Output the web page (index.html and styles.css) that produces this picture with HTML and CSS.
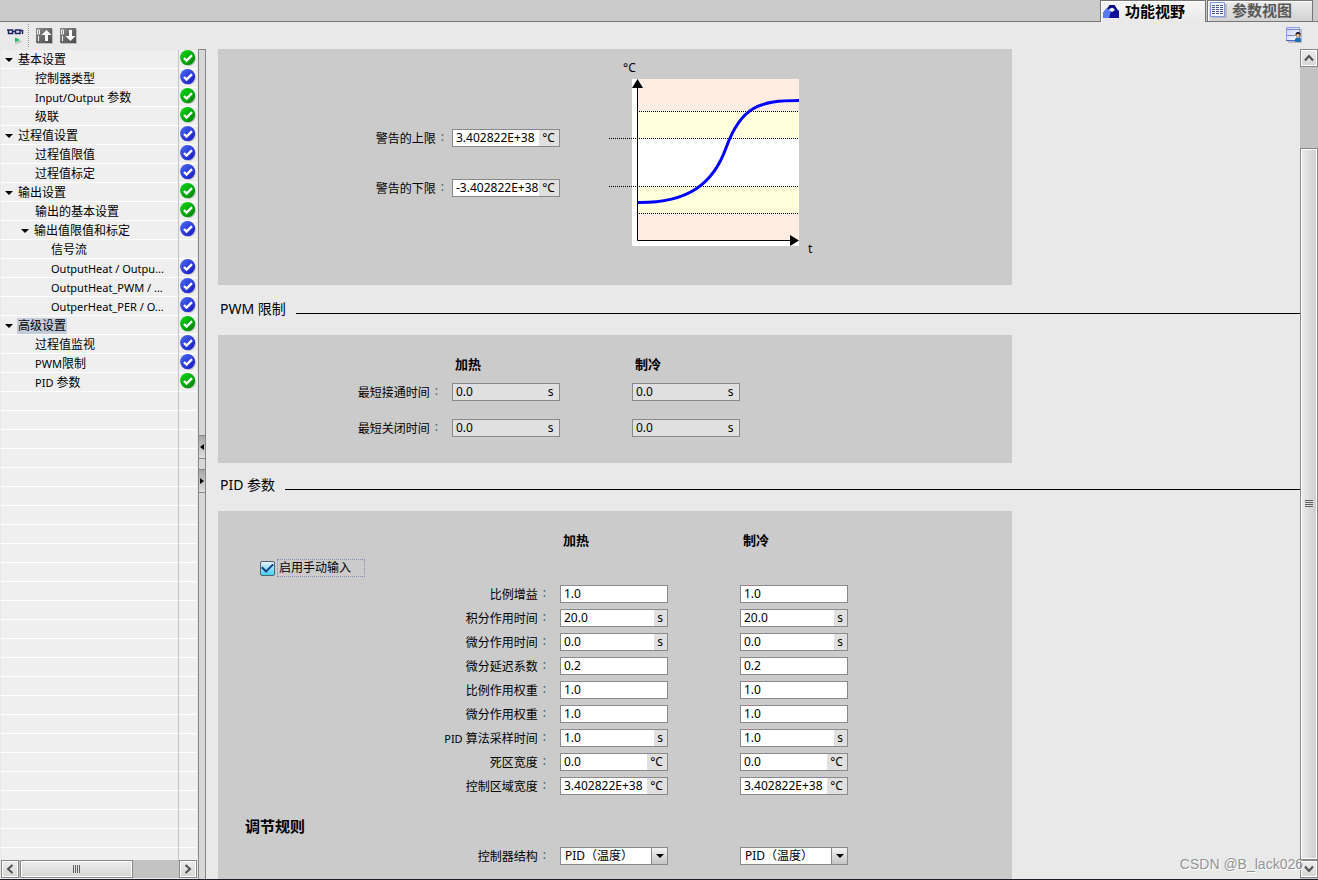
FILE: index.html
```html
<!DOCTYPE html>
<html lang="zh-CN">
<head>
<meta charset="utf-8">
<title>PID 组态</title>
<link rel="stylesheet" href="styles.css">
</head>
<body>
<svg class="defs" width="0" height="0" aria-hidden="true">
  <defs>
    <linearGradient id="g-green" x1="0" y1="0" x2="1" y2="1"><stop offset="0" stop-color="#00dc10"/><stop offset="1" stop-color="#007d08"/></linearGradient>
    <linearGradient id="g-blue" x1="0" y1="0" x2="1" y2="1"><stop offset="0" stop-color="#4a6cf4"/><stop offset="1" stop-color="#1414c0"/></linearGradient>
    <linearGradient id="g-dark" x1="0" y1="0" x2="1" y2="1"><stop offset="0" stop-color="#8a8a8a"/><stop offset="1" stop-color="#4c4c4c"/></linearGradient>
    <linearGradient id="g-page" x1="0" y1="0" x2="1" y2="1"><stop offset="0" stop-color="#c4d0f8"/><stop offset="1" stop-color="#ffffff"/></linearGradient>
    <symbol id="ok" viewBox="0 0 16 16"><circle cx="8.6" cy="8.8" r="7.3" fill="#c4c4c4"/><circle cx="7.6" cy="7.6" r="7.5" fill="url(#g-green)"/><path d="M4 8 L6.6 10.6 L12 5.2" fill="none" stroke="#fff" stroke-width="2.4"/></symbol>
    <symbol id="edit" viewBox="0 0 16 16"><circle cx="8.6" cy="8.8" r="7.3" fill="#c4c4c4"/><circle cx="7.6" cy="7.6" r="7.5" fill="url(#g-blue)"/><path d="M4 8 L6.6 10.6 L12 5.2" fill="none" stroke="#fff" stroke-width="2.4"/></symbol>
    <symbol id="down" viewBox="0 0 8 4"><path d="M0 0 H8 L4 4 Z" fill="#000"/></symbol>
  </defs>
</svg>

<header class="tabs" role="tablist">
  <button class="tab tab-active" role="tab" aria-selected="true">
    <svg width="17" height="16" viewBox="0 0 17 16"><path d="M0 10 L3 6 L6 4 H12 L16 8 V15 H0 Z" fill="#10109a"/><path d="M0 10 L3 6 L6 4 L8 8 L6 15 H0 Z" fill="#5a7cf0"/><path d="M5 6 L7 3 H11 L13 6" fill="none" stroke="#10107c" stroke-width="2"/><path d="M6 7 L8 5 H10 L12 7 L9 9 Z" fill="#eef2fe"/></svg>
    <span>功能视野</span>
  </button>
  <button class="tab" role="tab" aria-selected="false">
    <svg width="17" height="16" viewBox="0 0 17 16"><path d="M2 2 H17 V16 H2 Z" fill="#b8b8c0"/><path d="M.5 .5 H14.500 V14.500 H.5 Z" fill="#f2f5ff" stroke="#8098e0"/><path d="M2 3.500 H14 M2 5.500 H14 M2 7.500 H14 M2 9.500 H14 M2 11.500 H14" stroke="#4a5680" stroke-dasharray="3 1"/></svg>
    <span>参数视图</span>
  </button>
</header>

<div class="toolbar">
  <button class="tool" aria-label="监视">
    <svg width="18" height="18" viewBox="0 0 18 18"><path d="M1 3 H6.500 V6.500 H2.500 V3 M9.500 3 H14 V6.500 H9.500 Z M6 4.500 H10 M14 3.500 H16.500 V7" fill="none" stroke="#1c2468" stroke-width="1.500"/><path d="M9 11 L17 14.500 L9 18 Z" fill="#c4ccc4"/><path d="M9 10.500 L14 13 L9 15 Z" fill="#16c060"/></svg>
  </button>
  <span class="tool-sep"></span>
  <button class="tool" aria-label="上传">
    <svg width="17" height="16" viewBox="0 0 17 16"><path d="M1 1 H17 V16 H1 Z" fill="#bdbdbd"/><path d="M0 0 H16 V15 H0 Z" fill="url(#g-dark)"/><path d="M1.500 2 H3.500 V6 H1.500 Z M2.500 8 V13" fill="none" stroke="#eee"/><path d="M10.500 13 V5" fill="none" stroke="#fff" stroke-width="3"/><path d="M5.500 7 L10.500 2 L15.500 7 Z" fill="#fff"/></svg>
  </button>
  <button class="tool" aria-label="下载">
    <svg width="17" height="16" viewBox="0 0 17 16"><path d="M1 1 H17 V16 H1 Z" fill="#bdbdbd"/><path d="M0 0 H16 V15 H0 Z" fill="url(#g-dark)"/><path d="M1.500 2 H3.500 V6 H1.500 Z M2.500 8 V13" fill="none" stroke="#eee"/><path d="M10.500 2 V10" fill="none" stroke="#fff" stroke-width="3"/><path d="M5.500 8 L10.500 13 L15.500 8 Z" fill="#fff"/></svg>
  </button>
  <button class="tool tool-right" aria-label="视图设置">
    <svg width="17" height="17" viewBox="0 0 17 17"><path d="M2 2 H16 V16 H2 Z" fill="#bcbcc4"/><path d="M.5 .5 H13.500 V13.500 H.5 Z" fill="url(#g-page)" stroke="#8ca0e8"/><path d="M0 13.500 H14" stroke="#4c60c8"/><path d="M1 2.500 H14 M1 8.500 H9" stroke="#7c88b0"/><circle cx="12" cy="7.500" r="2.500" fill="#10102c"/><circle cx="12" cy="8.500" r="1.800" fill="#f0bc80"/><path d="M9 15 V12 L10.500 10.500 H13.500 L15 12 V15 Z" fill="#2470b0"/></svg>
  </button>
</div>

<div class="work">
  <nav class="side">
    <ul class="tree">
      <li class="row"><span class="name"><button class="twist" aria-label="折叠"><svg width="8" height="4"><use href="#down"/></svg></button><a href="#">基本设置</a></span><svg class="state"><use href="#ok"/></svg></li>
      <li class="row l1"><span class="name"><a href="#">控制器类型</a></span><svg class="state"><use href="#edit"/></svg></li>
      <li class="row l1"><span class="name"><a href="#"><span class="latin">Input/Output</span> 参数</a></span><svg class="state"><use href="#ok"/></svg></li>
      <li class="row l1"><span class="name"><a href="#">级联</a></span><svg class="state"><use href="#ok"/></svg></li>
      <li class="row"><span class="name"><button class="twist" aria-label="折叠"><svg width="8" height="4"><use href="#down"/></svg></button><a href="#">过程值设置</a></span><svg class="state"><use href="#edit"/></svg></li>
      <li class="row l1"><span class="name"><a href="#">过程值限值</a></span><svg class="state"><use href="#edit"/></svg></li>
      <li class="row l1"><span class="name"><a href="#">过程值标定</a></span><svg class="state"><use href="#edit"/></svg></li>
      <li class="row"><span class="name"><button class="twist" aria-label="折叠"><svg width="8" height="4"><use href="#down"/></svg></button><a href="#">输出设置</a></span><svg class="state"><use href="#ok"/></svg></li>
      <li class="row l1"><span class="name"><a href="#">输出的基本设置</a></span><svg class="state"><use href="#ok"/></svg></li>
      <li class="row l1"><span class="name"><button class="twist" aria-label="折叠"><svg width="8" height="4"><use href="#down"/></svg></button><a href="#">输出值限值和标定</a></span><svg class="state"><use href="#edit"/></svg></li>
      <li class="row l2"><span class="name"><a href="#">信号流</a></span></li>
      <li class="row l2"><span class="name"><a class="latin" href="#">OutputHeat / Outpu...</a></span><svg class="state"><use href="#edit"/></svg></li>
      <li class="row l2"><span class="name"><a class="latin" href="#">OutputHeat_PWM / ...</a></span><svg class="state"><use href="#edit"/></svg></li>
      <li class="row l2"><span class="name"><a class="latin" href="#">OutperHeat_PER / O...</a></span><svg class="state"><use href="#edit"/></svg></li>
      <li class="row"><span class="name"><button class="twist" aria-label="折叠"><svg width="8" height="4"><use href="#down"/></svg></button><a class="current" href="#">高级设置</a></span><svg class="state"><use href="#ok"/></svg></li>
      <li class="row l1"><span class="name"><a href="#">过程值监视</a></span><svg class="state"><use href="#edit"/></svg></li>
      <li class="row l1"><span class="name"><a href="#"><span class="latin">PWM</span>限制</a></span><svg class="state"><use href="#edit"/></svg></li>
      <li class="row l1"><span class="name"><a href="#"><span class="latin">PID</span> 参数</a></span><svg class="state"><use href="#ok"/></svg></li>
    </ul>
    <div class="hscroll">
      <button class="sb-btn" aria-label="向左"><svg width="8" height="10" viewBox="0 0 8 10"><path d="M6.500 1 L2 5 L6.500 9" fill="none" stroke="#505050" stroke-width="2"/></svg></button>
      <div class="hthumb"><svg width="8" height="8"><path d="M.5 0 V8 M2.500 0 V8 M4.500 0 V8 M6.500 0 V8" stroke="#606060"/></svg></div>
      <button class="sb-btn sb-end" aria-label="向右"><svg width="8" height="10" viewBox="0 0 8 10"><path d="M1.500 1 L6 5 L1.500 9" fill="none" stroke="#505050" stroke-width="2"/></svg></button>
    </div>
  </nav>

  <div class="splitter">
    <button aria-label="收起"><svg width="4" height="6"><path d="M4 0 V6 L0 3 Z"/></svg></button>
    <button aria-label="展开"><svg width="4" height="6"><path d="M0 0 V6 L4 3 Z"/></svg></button>
  </div>

  <main class="content">
    <section class="panel panel-limits">
      <div class="limits">
        <label class="lbl" for="hi">警告的上限<i>:</i></label>
        <span class="field"><input id="hi" value="3.402822E+38"><span class="unit wide">°C</span></span>
        <label class="lbl" for="lo">警告的下限<i>:</i></label>
        <span class="field"><input id="lo" value="-3.402822E+38"><span class="unit wide">°C</span></span>
      </div>
      <svg class="chart" width="208" height="196" viewBox="608 60 208 196" role="img" aria-label="温度曲线">
        <path d="M632 79 H799 V246 H632 Z" fill="#fff"/>
        <path d="M638 79 H799 V111 H638 Z M638 213 H799 V240 H638 Z" fill="#ffece2"/>
        <path d="M638 111 H799 V138 H638 Z M638 186 H799 V213 H638 Z" fill="#ffffdc"/>
        <path d="M639 111.500 H799 M609 138.500 H799 M609 186.500 H799 M639 213.500 H799" stroke="#000" stroke-dasharray="1 1"/>
        <path d="M638 202.500 C688 203 713 184 726 148 C741 106 760 100.500 799 100.500" fill="none" stroke="#00f" stroke-width="3"/>
        <path d="M637.500 86 V240.500 H792" fill="none" stroke="#000"/>
        <path d="M637.500 79 L643 88 H632 Z M799 240.500 L790 235 V246 Z" fill="#000"/>
        <text x="623" y="72">°C</text>
        <text x="808" y="253">t</text>
      </svg>
    </section>

    <h2 class="section section-tall">PWM 限制</h2>
    <section class="panel panel-pwm">
      <div class="grid grid-pwm">
        <b class="head head-a">加热</b><b class="head">制冷</b>
        <label class="lbl" for="on1">最短接通时间<i>:</i></label>
        <span class="field off"><input id="on1" value="0.0" readonly><span class="unit">s</span></span>
        <span class="field off"><input aria-label="最短接通时间 制冷" value="0.0" readonly><span class="unit">s</span></span>
        <label class="lbl" for="off1">最短关闭时间<i>:</i></label>
        <span class="field off"><input id="off1" value="0.0" readonly><span class="unit">s</span></span>
        <span class="field off"><input aria-label="最短关闭时间 制冷" value="0.0" readonly><span class="unit">s</span></span>
      </div>
    </section>

    <h2 class="section">PID 参数</h2>
    <section class="panel panel-pid">
      <div class="grid grid-pid">
        <b class="head head-a">加热</b><b class="head">制冷</b>
      </div>
      <div class="manual">
        <input type="checkbox" id="manual" checked><label for="manual">启用手动输入</label>
      </div>
      <div class="grid grid-pid">
        <label class="lbl" for="p1">比例增益<i>:</i></label>
        <span class="field"><input id="p1" value="1.0"></span>
        <span class="field"><input aria-label="比例增益 制冷" value="1.0"></span>
        <label class="lbl" for="p2">积分作用时间<i>:</i></label>
        <span class="field"><input id="p2" value="20.0"><span class="unit">s</span></span>
        <span class="field"><input aria-label="积分作用时间 制冷" value="20.0"><span class="unit">s</span></span>
        <label class="lbl" for="p3">微分作用时间<i>:</i></label>
        <span class="field"><input id="p3" value="0.0"><span class="unit">s</span></span>
        <span class="field"><input aria-label="微分作用时间 制冷" value="0.0"><span class="unit">s</span></span>
        <label class="lbl" for="p4">微分延迟系数<i>:</i></label>
        <span class="field"><input id="p4" value="0.2"></span>
        <span class="field"><input aria-label="微分延迟系数 制冷" value="0.2"></span>
        <label class="lbl" for="p5">比例作用权重<i>:</i></label>
        <span class="field"><input id="p5" value="1.0"></span>
        <span class="field"><input aria-label="比例作用权重 制冷" value="1.0"></span>
        <label class="lbl" for="p6">微分作用权重<i>:</i></label>
        <span class="field"><input id="p6" value="1.0"></span>
        <span class="field"><input aria-label="微分作用权重 制冷" value="1.0"></span>
        <label class="lbl" for="p7"><span><span class="latin">PID</span> 算法采样时间</span><i>:</i></label>
        <span class="field"><input id="p7" value="1.0"><span class="unit">s</span></span>
        <span class="field"><input aria-label="PID 算法采样时间 制冷" value="1.0"><span class="unit">s</span></span>
        <label class="lbl" for="p8">死区宽度<i>:</i></label>
        <span class="field"><input id="p8" value="0.0"><span class="unit wide">°C</span></span>
        <span class="field"><input aria-label="死区宽度 制冷" value="0.0"><span class="unit wide">°C</span></span>
        <label class="lbl" for="p9">控制区域宽度<i>:</i></label>
        <span class="field"><input id="p9" value="3.402822E+38"><span class="unit wide">°C</span></span>
        <span class="field"><input aria-label="控制区域宽度 制冷" value="3.402822E+38"><span class="unit wide">°C</span></span>
      </div>
      <h3 class="rule">调节规则</h3>
      <div class="grid grid-pid">
        <label class="lbl" for="s1">控制器结构<i>:</i></label>
        <span class="field pick"><select id="s1"><option>PID（温度）</option></select><span class="drop"><svg width="8" height="4"><use href="#down"/></svg></span></span>
        <span class="field pick"><select aria-label="控制器结构 制冷"><option>PID（温度）</option></select><span class="drop"><svg width="8" height="4"><use href="#down"/></svg></span></span>
      </div>
    </section>
  </main>

  <div class="vscroll">
    <button class="sb-btn" aria-label="向上"><svg width="10" height="8" viewBox="0 0 10 8"><path d="M1 6.500 L5 2 L9 6.500" fill="none" stroke="#505050" stroke-width="2"/></svg></button>
    <div class="vthumb"><svg width="8" height="8"><path d="M0 .5 H8 M0 2.500 H8 M0 4.500 H8 M0 6.500 H8" stroke="#606060"/></svg></div>
    <button class="sb-btn" aria-label="向下"><svg width="10" height="8" viewBox="0 0 10 8"><path d="M1 1.500 L5 6 L9 1.500" fill="none" stroke="#505050" stroke-width="2"/></svg></button>
  </div>
</div>
<div class="watermark">CSDN @B_lack026</div>
</body>
</html>
```
FILE: styles.css
```css
* { box-sizing: border-box; }
html, body { height: 100%; }
body {
  margin: 0;
  display: flex;
  flex-direction: column;
  overflow: hidden;
  position: relative;
  background: #e9e9e9;
  border-bottom: 1px solid #1c1c28;
  color: #000;
  font: 12px/18px "Noto Sans", "Noto Sans CJK SC", sans-serif;
}
button, input, select { font: inherit; color: inherit; margin: 0; }
button { padding: 0; border: 0; background: none; }
svg { display: block; flex: none; }
.defs { position: absolute; }
.latin { font-size: 11px; }

/* view tabs */
.tabs {
  flex: 0 0 22px;
  display: flex;
  justify-content: flex-end;
  gap: 1px;
  padding-right: 5px;
  background: linear-gradient(#cbcbcb 21px, #767676 21px);
}
.tab {
  display: flex;
  align-items: center;
  gap: 5px;
  width: 106px;
  height: 22px;
  padding: 0 2px 2px;
  border: 1px solid #767676;
  box-shadow: inset 1px 1px #fff;
  background: linear-gradient(#ececec, #d2d2d2);
  color: #585858;
  font-size: 15px;
  line-height: 18px;
  font-weight: 700;
  white-space: nowrap;
}
.tab-active {
  border-width: 1px 1px 0;
  background: linear-gradient(#f6f6f6, #e9e9e9);
  color: #000;
}

.toolbar {
  flex: 0 0 27px;
  display: flex;
  align-items: center;
  padding: 0 15px 0 6px;
}
.tool { width: 24px; display: flex; }
.tool-sep { height: 23px; margin: 0 7px 0 -2px; border-left: 1px dotted #999; }
.tool-right { width: 17px; margin-left: auto; }

.work { flex: 1; min-height: 0; display: flex; }

/* navigation tree */
.side { flex: 0 0 198px; display: flex; flex-direction: column; padding: 1px; }
.tree {
  flex: 1;
  min-height: 0;
  margin: 0;
  padding: 0;
  list-style: none;
  background:
    linear-gradient(#c4c4c4, #c4c4c4) 177px 0 / 1px 100% no-repeat,
    repeating-linear-gradient(#efefef 0 18px, #fff 18px 19px);
}
.row { display: grid; grid-template-columns: 1fr 17px; height: 19px; align-items: center; }
.name { display: flex; align-items: center; padding-left: 4px; white-space: nowrap; }
.l1 .name { padding-left: 20px; }
.l2 .name { padding-left: 49px; }
.l1 .name > a:only-child { margin-left: 13px; }
.name a { color: inherit; text-decoration: none; line-height: 16px; padding: 0 1px; }
.name .current { background: #c3ccd8; }
.twist { width: 12px; }
.state { width: 16px; height: 16px; align-self: start; }

/* scroll bars */
.hscroll { flex: 0 0 18px; display: flex; gap: 1px; background: #c3c3c3; }
.vscroll { flex: 0 0 18px; display: flex; flex-direction: column; padding-bottom: 1px; background: #c3c3c3; }
.sb-btn, .hthumb, .vthumb {
  display: flex;
  align-items: center;
  justify-content: center;
  border: 1px solid #868686;
  box-shadow: inset 0 0 0 1px #fff;
  background: linear-gradient(#ececec, #d6d6d6);
}
.sb-btn { flex: 0 0 18px; width: 18px; height: 18px; }
.sb-end { margin-left: auto; }
.hthumb { flex: 0 0 113px; }
.vthumb { flex: 1; margin-top: 81px; background: linear-gradient(90deg, #ececec, #cdcdcd); }

.splitter {
  flex: 0 0 8px;
  display: flex;
  flex-direction: column;
  justify-content: center;
  gap: 10px;
  padding-bottom: 2px;
  border: 1px solid #868686;
  border-bottom: 0;
  background: #d8d8d8;
}
.splitter button {
  height: 24px;
  display: flex;
  align-items: center;
  justify-content: center;
  border: 1px solid #868686;
  border-width: 1px 0;
  background: linear-gradient(#a8a8a8, #dedede);
}

/* forms */
.content { flex: 1; min-width: 0; overflow: hidden; padding-left: 12px; }
.panel { width: 794px; background: #cbcbcb; }
.panel-limits { display: flex; height: 236px; }
.limits {
  display: grid;
  grid-template-columns: 234px 108px;
  grid-auto-rows: 18px;
  row-gap: 32px;
  padding-top: 80px;
}
.chart { margin: 11px 0 0 48px; font-size: 12px; }

.section {
  display: flex;
  align-items: flex-end;
  gap: 10px;
  height: 48px;
  margin: 0;
  padding: 0 0 16px 2px;
  font-size: 14px;
  line-height: 20px;
  font-weight: 400;
}
.section-tall { height: 50px; }
.section::after { content: ""; flex: 1; margin-bottom: 5px; border-top: 1px solid #000; }

.panel-pwm { height: 128px; padding-top: 20px; }
.panel-pid { height: 400px; padding-top: 20px; }
.grid { display: grid; grid-auto-rows: 18px; }
.grid-pwm { grid-template: 10px / 234px 180px 108px; row-gap: 18px; }
.grid-pid { grid-template-columns: 342px 180px 108px; row-gap: 6px; }
.head { padding-left: 3px; font-size: 13px; line-height: 18px; }
.head-a { grid-column: 2; }
.lbl { display: flex; justify-content: flex-end; padding: 1px 14px 0 0; white-space: nowrap; }
.limits .lbl { padding-right: 8px; }
.lbl i { margin-left: 5px; font-style: normal; line-height: 14px; color: #3c5c6c; }

.field {
  display: flex;
  width: 108px;
  height: 18px;
  border: 1px solid #8a8a8a;
  background: #fff;
  line-height: 16px;
}
.field input { flex: 1; min-width: 0; width: 0; height: 16px; padding: 0 0 0 3px; border: 0; background: none; outline: 0; }
.unit { flex: 0 0 13px; padding-right: 1px; text-align: center; background: #e0e0e0; }
.wide { flex-basis: 20px; }
.off { background: #e0e0e0; }
.off .unit { flex-basis: 16px; }

.pick { display: grid; }
.pick > * { grid-area: 1 / 1; }
.pick select { width: 100%; height: 16px; padding: 0 0 0 4px; border: 0; appearance: none; background: none; line-height: 16px; }
.drop {
  justify-self: end;
  width: 16px;
  height: 16px;
  display: flex;
  align-items: center;
  justify-content: center;
  border-left: 1px solid #8a8a8a;
  background: linear-gradient(#f4f4f4, #c4c4c4);
  pointer-events: none;
}

.manual { display: flex; align-items: center; gap: 2px; height: 18px; margin: 10px 0 8px 42px; }
.manual input {
  appearance: none;
  width: 15px;
  height: 15px;
  border: 1px solid #50606c;
  border-radius: 2px;
  background: linear-gradient(#e8f0fc, #40d0f0);
  display: grid;
  place-items: center;
}
.manual input:checked::before {
  content: "";
  width: 9px;
  height: 5px;
  margin-bottom: 4px;
  border: solid #103c90;
  border-width: 0 0 2px 2px;
  transform: rotate(-45deg);
}
.manual label { width: 88px; line-height: 16px; padding-left: 1px; border: 1px dotted #8090c0; }

.rule { margin: 21px 0 11px 27px; font-size: 15px; line-height: 20px; font-weight: 700; }

.watermark {
  position: absolute;
  right: 15px;
  bottom: 6px;
  color: #949494;
  font: 14px/18px "Liberation Sans", Arial, sans-serif;
  text-shadow: 1px 1px #fff;
  pointer-events: none;
}
```
